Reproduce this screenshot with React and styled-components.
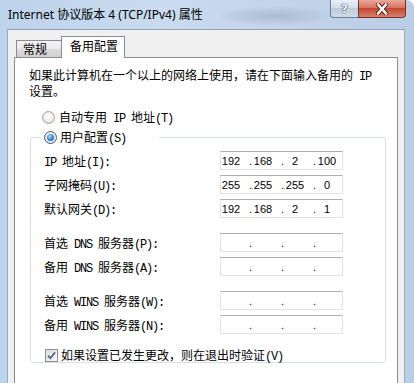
import React from "react";
import styled, { createGlobalStyle } from "styled-components";

const GlobalStyle = createGlobalStyle`
  html, body {
    margin: 0;
    padding: 0;
    background: #ffffff;
  }

  #root {
    width: 414px;
    height: 383px;
  }
`;

const ipRows = [
  { label: "IP 地址(I):", value: ["192", "168", "2", "100"] },
  { label: "子网掩码(U):", value: ["255", "255", "255", "0"] },
  { label: "默认网关(D):", value: ["192", "168", "2", "1"] },
];

const dnsRows = [
  { label: "首选 DNS 服务器(P):" },
  { label: "备用 DNS 服务器(A):" },
];

const winsRows = [
  { label: "首选 WINS 服务器(W):" },
  { label: "备用 WINS 服务器(N):" },
];

// half-width runs get squeezed to the 6px pitch of the dialog font
const Mixed = ({ text }) =>
  text
    .split(/([\x20-\x7e]+)/)
    .filter(Boolean)
    .map((part, i) =>
      /^[\x20-\x7e]+$/.test(part) ? <Latin key={i}>{part}</Latin> : part
    );

const IpBox = ({ value = ["", "", "", ""] }) => (
  <IpInput>
    {value.map((part, i) => (
      <React.Fragment key={i}>
        {i > 0 && <IpDot>.</IpDot>}
        <IpField>{part}</IpField>
      </React.Fragment>
    ))}
  </IpInput>
);

const FieldRows = ({ rows }) => (
  <RowGroup>
    {rows.map((row) => (
      <Row key={row.label}>
        <Label>
          <Mixed text={row.label} />
        </Label>
        <IpBox value={row.value} />
      </Row>
    ))}
  </RowGroup>
);

const App = () => {
  return (
    <>
      <GlobalStyle />
      <Window>
        <TitleBar>
          <Title>Internet 协议版本 4 (TCP/IPv4) 属性</Title>
          <CaptionButtons>
            <HelpButton>?</HelpButton>
            <CloseButton>
              <svg width="16" height="12" viewBox="0 0 16 12">
                <path
                  d="M4 1.5 L12 10.5 M12 1.5 L4 10.5"
                  stroke="#5a1d14"
                  strokeWidth="4.2"
                  strokeLinecap="round"
                  fill="none"
                />
                <path
                  d="M4 1.5 L12 10.5 M12 1.5 L4 10.5"
                  stroke="#ffffff"
                  strokeWidth="2.6"
                  strokeLinecap="round"
                  fill="none"
                />
              </svg>
            </CloseButton>
          </CaptionButtons>
        </TitleBar>

        <Client>
          <TabStrip>
            <Tab>常规</Tab>
            <Tab $active>备用配置</Tab>
          </TabStrip>

          <Panel>
            <Intro>
              <Mixed text="如果此计算机在一个以上的网络上使用，请在下面输入备用的 IP" />
              <br />
              设置。
            </Intro>

            <RadioRow>
              <Radio />
              <span>
                <Mixed text="自动专用 IP 地址(T)" />
              </span>
            </RadioRow>

            <GroupBox>
              <Legend>
                <Radio $checked />
                <span>
                  <Mixed text="用户配置(S)" />
                </span>
              </Legend>

              <FieldRows rows={ipRows} />
              <FieldRows rows={dnsRows} />
              <FieldRows rows={winsRows} />

              <CheckRow>
                <CheckBox>
                  <svg width="9" height="9" viewBox="0 0 9 9">
                    <path
                      d="M1 4.6 L3.4 7.2 L8 1.4"
                      stroke="#4c6286"
                      strokeWidth="1.8"
                      fill="none"
                    />
                  </svg>
                </CheckBox>
                <span>
                  <Mixed text="如果设置已发生更改，则在退出时验证(V)" />
                </span>
              </CheckRow>
            </GroupBox>
          </Panel>
        </Client>
      </Window>
    </>
  );
};

const Window = styled.div`
  width: 414px;
  height: 383px;
  overflow: hidden;
  display: flex;
  flex-direction: column;
  border-radius: 0 8px 0 0;
  background:
    radial-gradient(ellipse 60px 10px at 275px 16px, rgba(120, 140, 165, 0.35), transparent),
    linear-gradient(90deg, #bdd3ec 0%, #c9dbee 40%, #c3d4e8 70%, #b9cde6 100%);
  font-family: "Noto Sans CJK SC", sans-serif;
  font-size: 12px;
  color: #000;
`;

const Latin = styled.span`
  font-family: "Liberation Mono", monospace;
  font-size: 12px;
  letter-spacing: -1.2px;
  white-space: pre;
`;

const TitleBar = styled.div`
  height: 29px;
  flex-shrink: 0;
  display: flex;
  justify-content: space-between;
  align-items: flex-start;
  padding: 0 8px;
`;

const Title = styled.div`
  font-family: "Noto Sans", "Noto Sans CJK SC", sans-serif;
  font-size: 12px;
  line-height: 29px;
  color: #000;
`;

const CaptionButtons = styled.div`
  display: flex;
`;

const HelpButton = styled.div`
  width: 27px;
  height: 17px;
  border: 1px solid #6f7f94;
  border-top: none;
  border-right: none;
  border-radius: 0 0 0 4px;
  background: linear-gradient(#e9f0f8, #d3deeb 45%, #bccbdd 50%, #d2dcea);
  display: flex;
  align-items: center;
  justify-content: center;
  font-family: "DejaVu Sans", sans-serif;
  font-weight: bold;
  font-size: 12px;
  color: #f4f6f9;
  text-shadow: 0 0 1px #3b4a5e, 0 0 1px #3b4a5e, 0 0 1px #3b4a5e;
`;

const CloseButton = styled.div`
  width: 46px;
  height: 17px;
  border: 1px solid #7a3024;
  border-top: none;
  border-radius: 0 0 4px 0;
  background: linear-gradient(#e9a999, #d87560 45%, #c4452e 50%, #d5836c);
  display: flex;
  align-items: center;
  justify-content: center;
`;

const Client = styled.div`
  flex: 1;
  display: flex;
  flex-direction: column;
  margin: 0 9px 0 7px;
  padding: 6px 6px 0 6px;
  background: #f0f0f0;
  border-top: 1px solid #8fa3bb;
  border-left: 1px solid #9aa9bb;
  border-right: 1px solid #9aa9bb;
`;

const TabStrip = styled.div`
  height: 21px;
  display: flex;
  align-items: flex-end;
  padding-left: 2px;
  font-size: 12px;
`;

const Tab = styled.div`
  position: relative;
  box-sizing: border-box;
  height: ${(p) => (p.$active ? "22px" : "17px")};
  width: ${(p) => (p.$active ? "64px" : "46px")};
  margin-left: ${(p) => (p.$active ? "-1px" : "0")};
  margin-bottom: ${(p) => (p.$active ? "-1px" : "0")};
  padding-left: ${(p) => (p.$active ? "8px" : "6px")};
  line-height: ${(p) => (p.$active ? "18px" : "16px")};
  border: 1px solid #898c95;
  border-bottom: none;
  background: ${(p) =>
    p.$active ? "#ffffff" : "linear-gradient(#f3f3f3, #ebebeb 50%, #dddddd 51%, #cfcfcf)"};
  z-index: ${(p) => (p.$active ? 1 : 0)};
`;

const Panel = styled.div`
  flex: 1;
  background: #ffffff;
  border: 1px solid #898c95;
  border-bottom: none;
  padding: 10px 11px 0 14px;
`;

const Intro = styled.div`
  line-height: 13px;
`;

const RadioRow = styled.div`
  display: flex;
  align-items: center;
  gap: 4px;
  height: 14px;
  margin-top: 13px;
  padding-left: 13px;
`;

const Radio = styled.span`
  box-sizing: border-box;
  width: 13px;
  height: 13px;
  flex-shrink: 0;
  border-radius: 50%;
  border: 1px solid ${(p) => (p.$checked ? "#3d5d83" : "#a3a3a3")};
  background: radial-gradient(circle at 50% 40%, #ffffff 0%, #ececec 55%, #cfcfcf 100%);
  display: inline-flex;
  align-items: center;
  justify-content: center;

  &::after {
    content: "";
    display: ${(p) => (p.$checked ? "block" : "none")};
    width: 7px;
    height: 7px;
    border-radius: 50%;
    background: radial-gradient(circle at 40% 35%, #b9e1fb 0%, #3f93d9 45%, #154b88 100%);
  }
`;

const GroupBox = styled.fieldset`
  margin: 6px 0 0 1px;
  padding: 0 12px 0 13px;
  border: 1px solid #d5dfe5;
  border-radius: 3px;
  min-width: 0;
`;

const Legend = styled.legend`
  display: flex;
  align-items: center;
  gap: 3px;
  box-sizing: border-box;
  width: 118px;
  height: 14px;
  margin-left: -3px;
  padding: 0 0 0 3px;
`;

const RowGroup = styled.div`
  display: flex;
  flex-direction: column;
  gap: 5px;
  margin-top: 15px;

  &:first-of-type {
    margin-top: 7px;
  }
`;

const Row = styled.div`
  display: grid;
  grid-template-columns: 176px 123px;
  align-items: center;
  height: 19px;
`;

const Label = styled.span`
  white-space: nowrap;
`;

const IpInput = styled.div`
  box-sizing: border-box;
  height: 19px;
  display: flex;
  align-items: center;
  border: 1px solid #dfe3e8;
  border-top-color: #abadb3;
  background: #ffffff;
  font-family: "Liberation Sans", sans-serif;
  font-size: 11px;
  color: #000;
`;

const IpField = styled.span`
  width: 20px;
  text-align: center;
`;

const IpDot = styled.span`
  width: 12px;
  text-align: right;
  padding-right: 1px;
  box-sizing: border-box;
`;

const CheckRow = styled.div`
  display: flex;
  align-items: center;
  gap: 3px;
  height: 14px;
  margin-top: 14px;
  padding-left: 1px;
`;

const CheckBox = styled.span`
  box-sizing: border-box;
  width: 13px;
  height: 13px;
  border: 1px solid #8e8f8f;
  background: linear-gradient(135deg, #dcdcdc, #f8f8f8);
  display: inline-flex;
  align-items: center;
  justify-content: center;
`;

export default App;
